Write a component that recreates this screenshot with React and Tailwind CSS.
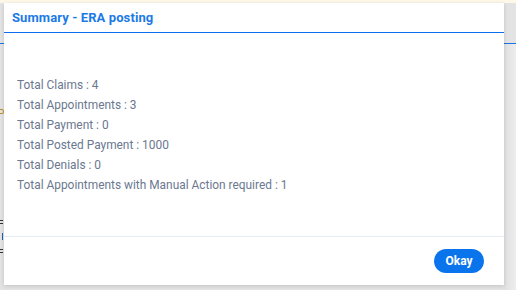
import React from 'react'

const rows = [
  ['Total Claims', '4'],
  ['Total Appointments', '3'],
  ['Total Payment', '0'],
  ['Total Posted Payment', '1000'],
  ['Total Denials', '0'],
  ['Total Appointments with Manual Action required', '1'],
]

function PageBehind() {
  return (
    <div className="w-[516px] h-[290px] flex flex-col bg-[#e3e3e3]">
      <div className="h-[3px] bg-[#fdf8e8]" />
      <div className="h-[40px]" />
      <div className="h-[1px] bg-[#1a73e8]" />
      <div className="flex-1 flex">
        <div className="w-[4px] flex flex-col pt-[65px]">
          <div className="w-[4px] h-[5px] rounded-r-full border border-l-0 border-[#c08a2a]" />
          <div className="h-[106px]" />
          <div className="w-[3px] h-[4px] border-y border-[#333]" />
          <div className="h-[9px]" />
          <div className="w-[3px] h-[7px] border-r border-[#1a5fb4]" />
          <div className="h-[9px]" />
          <div className="w-[3px] h-[4px] border-y border-[#333]" />
        </div>
        <div className="flex-1" />
        <div className="w-[12px] bg-gradient-to-r from-[#e0e0e0] to-[#ededed]" />
      </div>
    </div>
  )
}

function App() {
  return (
    <div className="relative w-[516px] h-[290px] overflow-hidden font-['Roboto',sans-serif]">
      <PageBehind />

      {/* modal over the page */}
      <div className="absolute left-[4px] top-[3px] w-[500px] h-[282px] bg-white flex flex-col shadow-[0_1px_4px_rgba(0,0,0,0.15)]">
        <div className="h-[30px] flex items-center pl-[8px] border-b border-[#0d6ef0]">
          <h4 className="text-[13px] tracking-[0.1px] font-bold text-[#1b7ae6] leading-none pb-[1px]">Summary - ERA posting</h4>
        </div>
        <div className="flex-1 pt-[42px] pl-[13px] flex flex-col">
          {rows.map(([label, value]) => (
            <p key={label} className="text-[11.9px] leading-[20px] text-[#6b7890]">
              {label} : {value}
            </p>
          ))}
        </div>
        <div className="h-[49px] border-t border-[#e6ebf4] flex items-center justify-end pr-[20px]">
          <button className="h-[24px] w-[50px] rounded-full bg-[#0a74ec] text-white text-[12px] font-bold">
            Okay
          </button>
        </div>
      </div>
    </div>
  )
}

export default App
